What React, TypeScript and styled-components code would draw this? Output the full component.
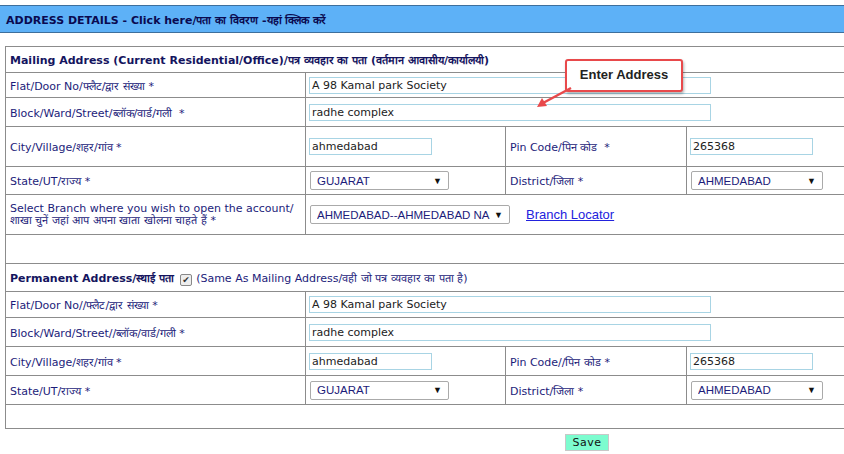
import React from "react";
import styled, { createGlobalStyle } from "styled-components";

const G = createGlobalStyle`
  body { margin: 0; background: #fff; font-family: "DejaVu Sans", Verdana, sans-serif; font-size: 11px; color: #1c1c7a; overflow: hidden; }
`;
const Page = styled.div`position: relative; width: 844px; height: 454px; padding-top: 5px; box-sizing: border-box;`;
const Header = styled.div`
  height: 26px; background: #5db1f7; border-top: 1px solid #3d6f9c; border-bottom: 1px solid #3d6f9c;
  display: flex; align-items: center; padding-left: 6px; font-weight: bold; font-size: 11px; color: #0a0a50;
`;
const Table = styled.table`
  margin: 13px 0 0 5px; width: 845px; border-collapse: collapse; table-layout: fixed;
  td { border: 1px solid #8c8c8c; padding: 0 4px; vertical-align: middle; }
`;
const Row = styled.tr<{ h: number }>`height: ${p => p.h}px;`;
const Bold = styled.td`font-weight: bold; font-size: 11px; color: #14145e;`;
const Input = styled.div<{ w: number }>`
  width: ${p => p.w}px; height: 17px; border: 1px solid #a8d4e4; box-sizing: border-box;
  display: flex; align-items: center; padding-left: 2px; color: #222; font-size: 11px; margin-left: -1px;
`;
const Select = styled.div<{ w: number }>`
  width: ${p => p.w}px; height: 19px; border: 1px solid #aaa; border-radius: 2px; box-sizing: border-box;
  display: flex; align-items: center; justify-content: space-between; gap: 4px; padding: 0 6px;
  font-family: "Liberation Sans", Arial, sans-serif; font-size: 11.5px; color: #1c1c7a; background: #fff;
  span:first-child { white-space: nowrap; overflow: hidden; }
  span:last-child { font-size: 9px; color: #111; flex: none; }
`;
const Inline = styled.div`display: flex; align-items: center; gap: 16px;`;
const Link = styled.a`color: #2222dd; text-decoration: underline; font-family: "Liberation Sans", Arial, sans-serif; font-size: 13px;`;
const Check = styled.span`
  display: inline-block; width: 10px; height: 10px; border: 1px solid #888; border-radius: 2px; margin: 0 4px 0 6px;
  vertical-align: -1px; font-size: 9px; line-height: 10px; text-align: center; color: #333; font-weight: normal; background: #eee;
`;
const Normal = styled.span`font-weight: normal; font-size: 11px; color: #1c1c7a;`;
const Footer = styled.div`display: flex; justify-content: center; padding: 5px 0 0 330px;`;
const Save = styled.button`
  background: #7dfccf; border: 1px solid #c8c8c8; font-family: "DejaVu Sans", Verdana, sans-serif; font-size: 11px;
  padding: 0 6px; height: 17px; line-height: 15px; color: #111; letter-spacing: 0.5px;
`;
const Callout = styled.div`
  position: absolute; left: 565px; top: 59px; width: 118px; height: 33px; box-sizing: border-box;
  border: 2px solid #e8494b; border-radius: 3px; background: #fff; box-shadow: 1px 2px 3px rgba(0,0,0,0.3);
  font-family: "Liberation Sans", Arial, sans-serif; font-weight: bold; font-size: 13px; color: #222;
  display: flex; justify-content: center; padding-top: 6px;
`;
const Arrow = styled.svg`position: absolute; left: 535px; top: 86px;`;

const sel = (w: number, t: string) => <Select w={w}><span>{t}</span><span>▼</span></Select>;

export default function App() {
  return (
    <Page>
      <G />
      <Header>ADDRESS DETAILS - Click here/पता का विवरण -यहां क्लिक करें</Header>
      <Table>
        <colgroup><col style={{ width: 300 }} /><col style={{ width: 200 }} /><col style={{ width: 181 }} /><col style={{ width: 164 }} /></colgroup>
        <tbody>
          <Row h={26}><Bold colSpan={4}>Mailing Address (Current Residential/Office)/पत्र व्यवहार का पता (वर्तमान आवासीय/कार्यालयी)</Bold></Row>
          <Row h={25}><td>Flat/Door No/फ्लैट/द्वार संख्या *</td><td colSpan={3}><Input w={402}>A 98 Kamal park Society</Input></td></Row>
          <Row h={29}><td>Block/Ward/Street/ब्लॉक/वार्ड/गली &nbsp;*</td><td colSpan={3}><Input w={402}>radhe complex</Input></td></Row>
          <Row h={40}><td>City/Village/शहर/गांव *</td><td><Input w={123}>ahmedabad</Input></td><td>Pin Code/पिन कोड &nbsp;*</td><td><Input w={123}>265368</Input></td></Row>
          <Row h={28}><td>State/UT/राज्य *</td><td>{sel(139, "GUJARAT")}</td><td>District/जिला *</td><td>{sel(132, "AHMEDABAD")}</td></Row>
          <Row h={40}><td style={{ lineHeight: "12px" }}>Select Branch where you wish to open the account/<br />शाखा चुनें जहां आप अपना खाता खोलना चाहते हैं *</td><td colSpan={3}><Inline>{sel(200, "AHMEDABAD--AHMEDABAD NAROE")}<Link>Branch Locator</Link></Inline></td></Row>
          <Row h={29}><td colSpan={4}></td></Row>
          <Row h={28}><Bold colSpan={4}>Permanent Address/स्थाई पता<Check>✔</Check><Normal>(Same As Mailing Address/वही जो पत्र व्यवहार का पता है)</Normal></Bold></Row>
          <Row h={26}><td>Flat/Door No//फ्लैट/द्वार संख्या *</td><td colSpan={3}><Input w={402}>A 98 Kamal park Society</Input></td></Row>
          <Row h={29}><td>Block/Ward/Street//ब्लॉक/वार्ड/गली *</td><td colSpan={3}><Input w={402}>radhe complex</Input></td></Row>
          <Row h={29}><td>City/Village/शहर/गांव *</td><td><Input w={123}>ahmedabad</Input></td><td>Pin Code//पिन कोड *</td><td><Input w={123}>265368</Input></td></Row>
          <Row h={29}><td>State/UT/राज्य *</td><td>{sel(139, "GUJARAT")}</td><td>District/जिला *</td><td>{sel(132, "AHMEDABAD")}</td></Row>
          <Row h={24}><td colSpan={4}></td></Row>
        </tbody>
      </Table>
      <Footer><Save>Save</Save></Footer>
      <Callout>Enter Address</Callout>
      <Arrow width="40" height="24" viewBox="0 0 40 24">
        <line x1="36" y1="2" x2="8" y2="17" stroke="#e8494b" strokeWidth="2.5" />
        <polygon points="2,21 7,12 12,20" fill="#e8494b" />
      </Arrow>
    </Page>
  );
}
